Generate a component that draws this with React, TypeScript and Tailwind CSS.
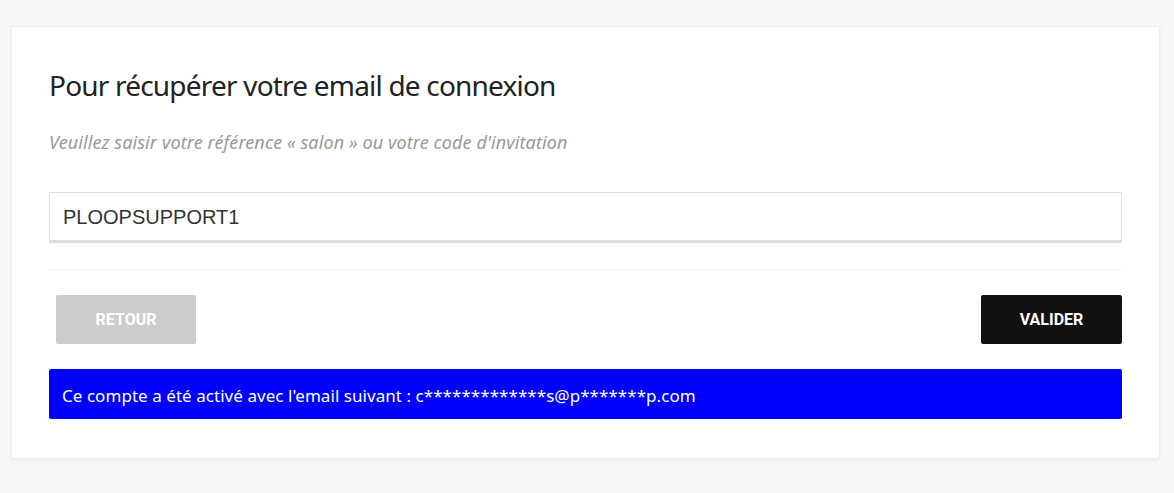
export default function App() {
  const ss = { fontFamily: '"Source Sans Pro", "Noto Sans", "Liberation Sans", sans-serif' };
  return (
    <div className="min-h-[493px] w-full bg-[#f8f8f8] pt-[26px] pl-[11px] pr-[14px]" style={ss}>
      <div className="bg-white border border-[#eeeeee] shadow-[0_1px_3px_rgba(0,0,0,0.06)] px-[37px] pt-[40px] pb-[39px]">
        <h1 className="text-[28px] leading-[36px] text-[#222] font-normal tracking-[-0.8px]">Pour récupérer votre email de connexion</h1>
        <p className="mt-[27px] text-[18px] leading-[24px] italic text-[#999] tracking-[0.1px]">Veuillez saisir votre référence « salon » ou votre code d'invitation</p>
        <div className="mt-[38px] h-[51px] border border-[#dddddd] border-b-[3px] flex items-center px-[13px]">
          <span className="text-[20px] text-[#333]" style={{ fontFamily: '"Liberation Sans", Arial, sans-serif' }}>PLOOPSUPPORT1</span>
        </div>
        <div className="mt-[26px] border-t border-dotted border-[#e5e5e5]"></div>
        <div className="mt-[25px] flex justify-between items-center pl-[7px]">
          <button className="w-[140px] h-[49px] rounded-[2px] bg-[#cccccc] text-white text-[16px] font-bold" style={{ fontFamily: 'Roboto, sans-serif' }}>RETOUR</button>
          <button className="w-[141px] h-[49px] rounded-[2px] bg-[#111111] text-white text-[16px] font-bold" style={{ fontFamily: 'Roboto, sans-serif' }}>VALIDER</button>
        </div>
        <div className="mt-[25px] h-[50px] bg-[#0000ff] rounded-[2px] flex items-center px-[13px] pt-[3px] text-white text-[17px] tracking-[0.05px]">
          Ce compte a été activé avec l'email suivant : c*************s@p*******p.com
        </div>
      </div>
    </div>
  );
}
